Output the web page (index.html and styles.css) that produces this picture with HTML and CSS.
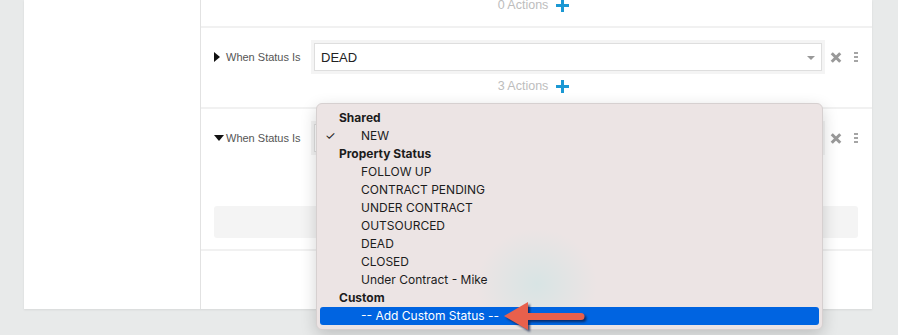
FILE: index.html
```html
<!DOCTYPE html>
<html>
	<head>
		<meta charset="utf-8" />
		<title>Status Rules</title>
		<link rel="stylesheet" href="styles.css">
	</head>
	<body>
		<div class="card">
			<div class="side"></div>
			<div class="main">
				<div class="row row-top">
					<div class="actions actions-cut">0 Actions <span class="plus"></span></div>
				</div>

				<div class="row row-dead">
					<div class="rule">
						<div class="label"><span class="tri-right"></span>When Status Is</div>
						<div class="select">DEAD<span class="caret"></span></div>
						<span class="xbtn"></span>
						<span class="kebab"><i></i><i></i><i></i></span>
					</div>
					<div class="actions">3 Actions <span class="plus"></span></div>
				</div>

				<div class="row row-open">
					<div class="rule">
						<div class="label"><span class="tri-down"></span>When Status Is</div>
						<div class="select"></div>
						<span class="xbtn"></span>
						<span class="kebab"><i></i><i></i><i></i></span>
					</div>
					<div class="empty-box"></div>
				</div>

				<div class="row row-last"></div>
			</div>
		</div>

		<!-- native select menu, open over the second rule -->
		<div class="menu">
			<div class="blob"></div>
			<div class="group">Shared</div>
			<div class="opt checked"><span class="check">✓</span>NEW</div>
			<div class="group">Property Status</div>
			<div class="opt">FOLLOW UP</div>
			<div class="opt">CONTRACT PENDING</div>
			<div class="opt">UNDER CONTRACT</div>
			<div class="opt">OUTSOURCED</div>
			<div class="opt">DEAD</div>
			<div class="opt">CLOSED</div>
			<div class="opt">Under Contract - Mike</div>
			<div class="group">Custom</div>
			<div class="opt active">-- Add Custom Status --</div>
		</div>

		<svg class="arrow" width="92" height="30" viewBox="0 0 92 30">
			<line x1="24" y1="16.5" x2="81" y2="16.5" stroke="#e8604c" stroke-width="7" stroke-linecap="round" />
			<polygon points="4,16 28,2 28,30" fill="#e8604c" />
		</svg>
	</body>
</html>
```

FILE: styles.css
```css
*{
	padding: 0;
	margin: 0;
	box-sizing: border-box;
}
html,body{
	width: 100%;
	height: 100%;
}
body{
	background-color: #e8eaea;
	font-family: "Liberation Sans", Arial, sans-serif;
	overflow: hidden;
	position: relative;
}
.card{
	margin-left: 24px;
	width: 848px;
	height: 309px;
	background: #fff;
	display: flex;
	box-shadow: 0 1px 2px rgba(0,0,0,0.08);
}
.side{
	width: 177px;
	border-right: 1px solid #e2e2e2;
}
.main{
	flex: 1;
	display: flex;
	flex-direction: column;
}
.row{
	border-bottom: 2px solid #f1f1f1;
}
.row-top{
	height: 28px;
}
.row-dead{
	height: 81px;
	padding-top: 15px;
}
.row-open{
	height: 142px;
	padding-top: 15px;
}
.row-last{
	flex: 1;
	border-bottom: none;
}
.actions{
	display: flex;
	justify-content: center;
	align-items: center;
	gap: 8px;
	height: 16px;
	font-size: 12.5px;
	color: #bdbdbd;
	padding-right: 6px;
}
.actions-cut{
	margin-top: -3px;
}
.row-dead .actions{
	margin-top: 7px;
}
.plus{
	width: 13px;
	height: 13px;
	position: relative;
	display: inline-block;
}
.plus::before,.plus::after{
	content: "";
	position: absolute;
	background: #1b98d3;
}
.plus::before{
	left: 0;
	top: 5px;
	width: 13px;
	height: 3px;
}
.plus::after{
	left: 5px;
	top: 0;
	width: 3px;
	height: 13px;
}
.rule{
	display: flex;
	align-items: center;
	padding-left: 13px;
	height: 28px;
}
.label{
	width: 100px;
	flex-shrink: 0;
	display: flex;
	align-items: center;
	font-size: 11px;
	color: #555;
}
.tri-right{
	width: 0;
	height: 0;
	border-top: 5px solid transparent;
	border-bottom: 5px solid transparent;
	border-left: 6px solid #111;
	margin-right: 6px;
}
.tri-down{
	width: 0;
	height: 0;
	border-left: 5px solid transparent;
	border-right: 5px solid transparent;
	border-top: 6px solid #111;
	margin-right: 2px;
}
.select{
	width: 508px;
	flex-shrink: 0;
	height: 28px;
	border: 1px solid #dedede;
	box-shadow: 0 0 0 3px #f4f4f4;
	display: flex;
	align-items: center;
	padding-left: 6px;
	font-size: 13px;
	color: #222;
	position: relative;
}
.caret{
	position: absolute;
	right: 6px;
	top: 12px;
	border-left: 4px solid transparent;
	border-right: 4px solid transparent;
	border-top: 4px solid #999;
}
.xbtn{
	width: 10px;
	height: 10px;
	margin-left: 9px;
	position: relative;
}
.xbtn::before,.xbtn::after{
	content: "";
	position: absolute;
	left: -1px;
	top: 3.5px;
	width: 12px;
	height: 3px;
	background: #999;
	transform: rotate(45deg);
}
.xbtn::after{
	transform: rotate(-45deg);
}
.kebab{
	margin-left: 13px;
	display: flex;
	flex-direction: column;
	gap: 2px;
}
.kebab i{
	display: block;
	width: 4px;
	height: 2px;
	background: #a5a5a5;
}
.empty-box{
	margin: 54px 14px 0 13px;
	height: 32px;
	background: #f4f4f4;
	border-radius: 3px;
}

/* dropdown over the rows */
.menu{
	position: absolute;
	left: 316px;
	top: 103px;
	width: 507px;
	height: 227px;
	background: #ece4e4;
	border: 1px solid #d6d0d0;
	border-radius: 6px;
	box-shadow: 0 5px 16px rgba(0,0,0,0.18);
	padding: 5px 3px;
	font-family: Inter, "Noto Sans", sans-serif;
	font-size: 12px;
	color: #1c1c1c;
	overflow: hidden;
}
.blob{
	position: absolute;
	left: 160px;
	top: 125px;
	width: 120px;
	height: 110px;
	border-radius: 50%;
	background: radial-gradient(closest-side, rgba(214,228,228,0.9), rgba(214,228,228,0));
}
.group,.opt{
	height: 18px;
	line-height: 18px;
	position: relative;
}
.group{
	font-weight: 700;
	padding-left: 19px;
}
.opt{
	padding-left: 41px;
}
.check{
	position: absolute;
	left: 5px;
	top: 0;
	font-size: 12px;
}
.opt.active{
	background: #0064e1;
	color: #fff;
	border-radius: 3px;
}
.arrow{
	position: absolute;
	left: 500px;
	top: 300px;
	filter: drop-shadow(2px 2px 1px rgba(10,25,70,0.75));
}
```
